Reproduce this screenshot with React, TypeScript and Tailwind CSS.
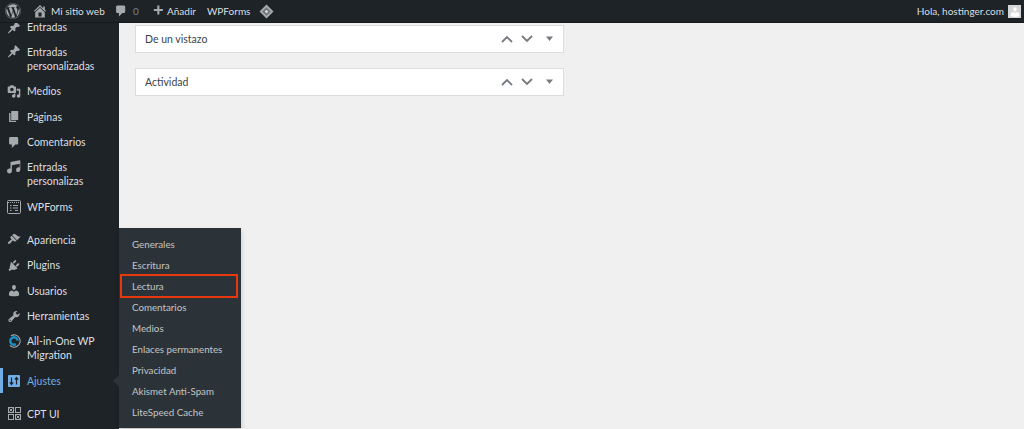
import React from "react";
import { FaWordpress } from "react-icons/fa";

const D = ({ d, className = "w-[17px] h-[17px]" }: { d: string; className?: string }) => (
  <svg viewBox="0 0 20 20" className={className} fill="currentColor">
    <path d={d} />
  </svg>
);

const P = {
  pin: "M10.44 3.02l1.82-1.82 6.36 6.35-1.83 1.82c-1.05-.68-2.48-.57-3.41.36l-.75.75c-.92.93-1.04 2.35-.35 3.41l-1.83 1.82-2.41-2.41-2.8 2.79c-.42.42-3.38 2.71-3.8 2.29s1.86-3.39 2.28-3.81l2.79-2.79L4.1 9.36l1.83-1.82c1.05.69 2.48.57 3.4-.36l.75-.75c.93-.92 1.05-2.35.36-3.41z",
  media: "M13 11V4c0-.55-.45-1-1-1h-1.67L9 1H5L3.67 3H2c-.55 0-1 .45-1 1v7c0 .55.45 1 1 1h10c.55 0 1-.45 1-1zM7 4.5c1.38 0 2.5 1.12 2.5 2.5S8.38 9.5 7 9.5 4.5 8.38 4.5 7 5.62 4.5 7 4.5zM14 6h5v10.5c0 1.38-1.12 2.5-2.5 2.5S14 17.88 14 16.5s1.12-2.5 2.5-2.5c.17 0 .34.02.5.05V9h-3V6zm-4 8.05V13h2v3.5c0 1.38-1.12 2.5-2.5 2.5S7 17.88 7 16.5 8.12 14 9.5 14c.17 0 .34.02.5.05z",
  page: "M6 15V2h10v13H6zm-1 1h8v2H3V5h2v11z",
  comment: "M5 2h9c1.1 0 2 .9 2 2v7c0 1.1-.9 2-2 2h-2l-5 5v-5H5c-1.1 0-2-.9-2-2V4c0-1.1.9-2 2-2z",
  audio: "M6.99 3.08l11.02-2c.55-.08.99.45.99 1V14.5c0 1.94-1.57 3.5-3.5 3.5S13 16.44 13 14.5 14.57 11 16.5 11c.54 0 1.05.12 1.5.34V6.21L7 8.19v8.31c0 1.94-1.57 3.5-3.5 3.5S0 18.44 0 16.500 1.57 13 3.5 13c.54 0 1.05.12 1.5.34V4.09c0-.55.44-.94.99-1.01z",
  brush: "M14.48 11.06L7.41 3.99l1.5-1.5c.5-.56 2.3-.47 3.51.32 1.21.8 1.43 1.28 2.91 2.1 1.18.64 2.45 1.26 4.23.85zm-.71.71L6.7 4.7 4.93 6.47c-.39.39-.39 1.02 0 1.41l1.06 1.06c.39.39.39 1.03 0 1.42-.6.6-1.43 1.11-2.21 1.69-.35.26-.7.53-1.01.84C1.43 13.71.8 15.12 1.39 15.71c.6.6 2 .97 3.84-.87.3-.31.58-.65.84-1 .58-.78 1.09-1.62 1.69-2.21.39-.39 1.02-.39 1.41 0l1.06 1.06c.39.39 1.02.39 1.41 0z",
  plug: "M13.11 4.36L9.87 7.6 8 5.73l3.24-3.24c.35-.34 1.05-.2 1.56.32.52.51.66 1.21.31 1.55zm-8 1.77l.91-1.12 9.01 9.01-1.19.84c-.71.71-2.63 1.16-3.82 1.16H6.14L4.9 17.26c-.59.59-1.54.59-2.12 0-.59-.58-.59-1.53 0-2.12l1.24-1.24v-1.88c0-1.19.45-3.11 1.09-3.89zm7.26 3.97l3.24-3.24c.34-.35 1.04-.2 1.56.31.51.52.65 1.22.31 1.56l-3.24 3.25z",
  user: "M10 9.25c-2.27 0-2.73-3.44-2.73-3.44C7 4.02 7.82 2 9.97 2c2.16 0 2.98 2.02 2.71 3.81 0 0-.41 3.44-2.68 3.44zm0 2.57L12.72 10c2.39 0 4.52 2.33 4.52 4.53v2.49s-3.65 1.13-7.24 1.13c-3.65 0-7.24-1.13-7.24-1.13v-2.49c0-2.25 1.94-4.48 4.47-4.48z",
  tool: "M16.68 9.77c-1.34 1.34-3.3 1.67-4.95.99l-5.41 6.52c-.99.99-2.59.99-3.58 0s-.99-2.59 0-3.57l6.52-5.42c-.68-1.65-.35-3.61.99-4.95 1.28-1.28 3.12-1.62 4.72-1.06l-2.89 2.89 2.82 2.82 2.86-2.87c.53 1.58.18 3.41-1.08 4.65zM3.81 16.21c.4.39 1.04.39 1.43 0 .4-.4.4-1.04 0-1.43-.39-.4-1.03-.4-1.43 0-.39.39-.39 1.03 0 1.43z",
  home: "M16 8.5l1.53 1.53-1.06 1.06L10 4.62l-6.47 6.47-1.06-1.06L10 2.5l4 4v-2h2v4zm-6-2.46l6 5.99V18H4v-5.97zM12 17v-5H8v5h4z",
  plus: "M17 7v3h-5v5H9v-5H4V7h5V2h3v5h5z",
};

const Forms = () => (
  <svg viewBox="0 0 14 14" className="w-[14px] h-[14px]" fill="none" stroke="currentColor" strokeWidth="1">
    <rect x="0.500" y="0.500" width="13" height="13" rx="1" />
    <path d="M1 2.500h12" strokeDasharray="1 1" />
    <path d="M3 5.500h1.500M6 5.500h5M3 8h1.500M6 8h5M3 10.500h1.500M8 10.500h3" strokeWidth="1.200" />
  </svg>
);

const Migration = () => (
  <svg viewBox="0 0 16 16" className="w-[14px] h-[14px]">
    <circle cx="8" cy="8" r="7" fill="none" stroke="#a7aaad" strokeWidth="1.200" strokeDasharray="30 14" transform="rotate(-120 8 8)" />
    <circle cx="8" cy="8" r="4.200" fill="none" stroke="#1d8fc6" strokeWidth="2.800" strokeDasharray="21 6" transform="rotate(60 8 8)" />
  </svg>
);

const Settings = () => (
  <svg viewBox="0 0 12 12" className="w-[12px] h-[12px]">
    <rect width="12" height="12" rx="1" fill="#72aee6" />
    <path d="M3.500 2.500v6.500M1.800 7.300 3.500 9.500l1.700-2.200M8.500 9.500V3M6.800 4.700 8.500 2.500l1.700 2.200" stroke="#1d2327" strokeWidth="1.200" fill="none" />
  </svg>
);

const Cpt = () => (
  <svg viewBox="0 0 13 13" className="w-[13px] h-[13px]" fill="none" stroke="currentColor">
    <rect x="0.500" y="0.500" width="5" height="5" />
    <path d="M1.500 1.500l3 3M4.500 1.500l-3 3" />
    <rect x="7.500" y="0.500" width="5" height="5" />
    <rect x="0.500" y="7.500" width="5" height="5" />
    <rect x="7.500" y="7.500" width="5" height="5" />
    <path d="M8.500 8.500l3 3M11.500 8.500l-3 3" />
  </svg>
);

const Diamond = () => (
  <svg viewBox="0 0 16 16" className="w-[15px] h-[15px] block">
    <path d="M8 .5 15.500 8 8 15.500.5 8z" fill="#a7aaad" />
    <path d="M8 3.500 12.500 8 8 12.500 3.500 8z" fill="#6d7378" />
    <path d="M8 6 10 8 8 10 6 8z" fill="#d5d7d8" />
  </svg>
);

type Item = { label: React.ReactNode; icon: React.ReactNode; two?: boolean; active?: boolean; gapAfter?: boolean };

const items: Item[] = [
  { label: "Entradas", icon: <D d={P.pin} /> },
  { label: <>Entradas<br />personalizadas</>, icon: <D d={P.pin} />, two: true },
  { label: "Medios", icon: <D d={P.media} /> },
  { label: "Páginas", icon: <D d={P.page} /> },
  { label: "Comentarios", icon: <D d={P.comment} /> },
  { label: <>Entradas<br />personalizas</>, icon: <D d={P.audio} className="w-[15px] h-[15px]" />, two: true },
  { label: "WPForms", icon: <Forms />, gapAfter: true },
  { label: "Apariencia", icon: <D d={P.brush} /> },
  { label: "Plugins", icon: <D d={P.plug} /> },
  { label: "Usuarios", icon: <D d={P.user} /> },
  { label: "Herramientas", icon: <D d={P.tool} /> },
  { label: <>All-in-One WP<br />Migration</>, icon: <Migration />, two: true },
  { label: "Ajustes", icon: <Settings />, active: true, gapAfter: true },
  { label: "CPT UI", icon: <Cpt /> },
];

const flyout = ["Generales", "Escritura", "Lectura", "Comentarios", "Medios", "Enlaces permanentes", "Privacidad", "Akismet Anti-Spam", "LiteSpeed Cache"];

const Panel = ({ title }: { title: string }) => (
  <section className="w-[429px] h-[28px] bg-white border border-[#dcdcde] flex items-center pl-[9px] pr-[9px] text-[#3c434a] text-[10.500px]">
    <span className="flex-1 pt-[2px]">{title}</span>
    <svg viewBox="0 0 54 10" className="w-[54px] h-[10px]" fill="none" stroke="#787c82" strokeWidth="1.800">
      <path d="M2 8 7 3l5 5M22 2l5 5 5-5" />
      <path d="M46 2.500h7l-3.500 4.500z" fill="#787c82" stroke="none" />
    </svg>
  </section>
);

export default function App() {
  return (
    <div className="relative w-[1024px] h-[429px] overflow-hidden bg-[#f0f0f1] flex flex-col font-['Lato','Noto_Sans',sans-serif]">
      <header className="h-[23px] shrink-0 bg-[#1d2327] text-[#dcdee0] text-[10px] whitespace-nowrap flex items-center relative z-20 border-b border-[#15191c]">
        <FaWordpress className="w-[16px] h-[16px] ml-[5px] text-[#a7aaad] shrink-0" />
        <D d={P.home} className="w-[16px] h-[16px] ml-[11px] text-[#a7aaad] shrink-0" />
        <span className="ml-[3px] w-[52px]">Mi sitio web</span>
        <D d={P.comment} className="w-[14px] h-[14px] ml-[11px] text-[#a7aaad] shrink-0" />
        <span className="ml-[5px] w-[12px] text-[#7c8287]">0</span>
        <D d={P.plus} className="w-[14px] h-[14px] ml-[6px] text-[#a7aaad] shrink-0" />
        <span className="ml-[2px] w-[32px]">Añadir</span>
        <span className="ml-[8px] w-[44px]">WPForms</span>
        <span className="ml-[8px]"><Diamond /></span>
        <span className="ml-auto">Hola, hostinger.com</span>
        <span className="ml-[4px] mr-[3px] w-[13px] h-[13px] bg-[#d4d5d6] flex items-end justify-center overflow-hidden">
          <D d={P.user} className="w-[12px] h-[12px] text-white" />
        </span>
      </header>

      <div className="flex flex-1 min-h-0">
        <nav className="relative w-[119px] shrink-0 bg-[#1d2327] text-[#dcdee0] text-[10.500px] leading-[14px] flex flex-col">
          <div className="mt-[-8.700px]">
            {items.map((it, i) => (
              <div
                key={i}
                className={`relative flex pl-[7px] ${it.two ? "h-[39px] items-start pt-[5px]" : "h-[25.400px] items-center"} ${it.gapAfter ? "mb-[8px]" : ""} ${it.active ? "text-[#72aee6]" : ""}`}
              >
                {it.active && <span className="absolute left-0 top-0 bottom-0 w-[3px] bg-[#72aee6]" />}
                <span className={`w-[14px] h-[14px] flex items-center justify-center shrink-0 ${it.active ? "" : "text-[#a7aaad]"}`}>{it.icon}</span>
                <span className="ml-[6px]">{it.label}</span>
              </div>
            ))}
          </div>
        </nav>

        <main className="flex-1 pl-[16px] pt-[2px] flex flex-col gap-[15px]">
          <Panel title="De un vistazo" />
          <Panel title="Actividad" />
        </main>
      </div>

      <div className="absolute left-[119px] top-[228px] w-[122px] h-[200px] bg-[#2c3338] pt-[6px] text-[#c3c4c7] text-[9.750px] shadow-[0_3px_5px_rgba(0,0,0,0.2)] z-10">
        <span className="absolute left-[-6px] top-[147px] w-0 h-0 border-y-[6px] border-y-transparent border-r-[6px] border-r-[#2c3338]" />
        {flyout.map((f) => (
          <div key={f} className={`h-[21px] flex items-center pl-[13px] ${f === "Lectura" ? "relative" : ""}`}>
            {f}
            {f === "Lectura" && <span className="absolute left-[1px] top-[-2px] w-[118px] h-[24px] border-2 border-[#e8380d]" />}
          </div>
        ))}
      </div>
    </div>
  );
}
